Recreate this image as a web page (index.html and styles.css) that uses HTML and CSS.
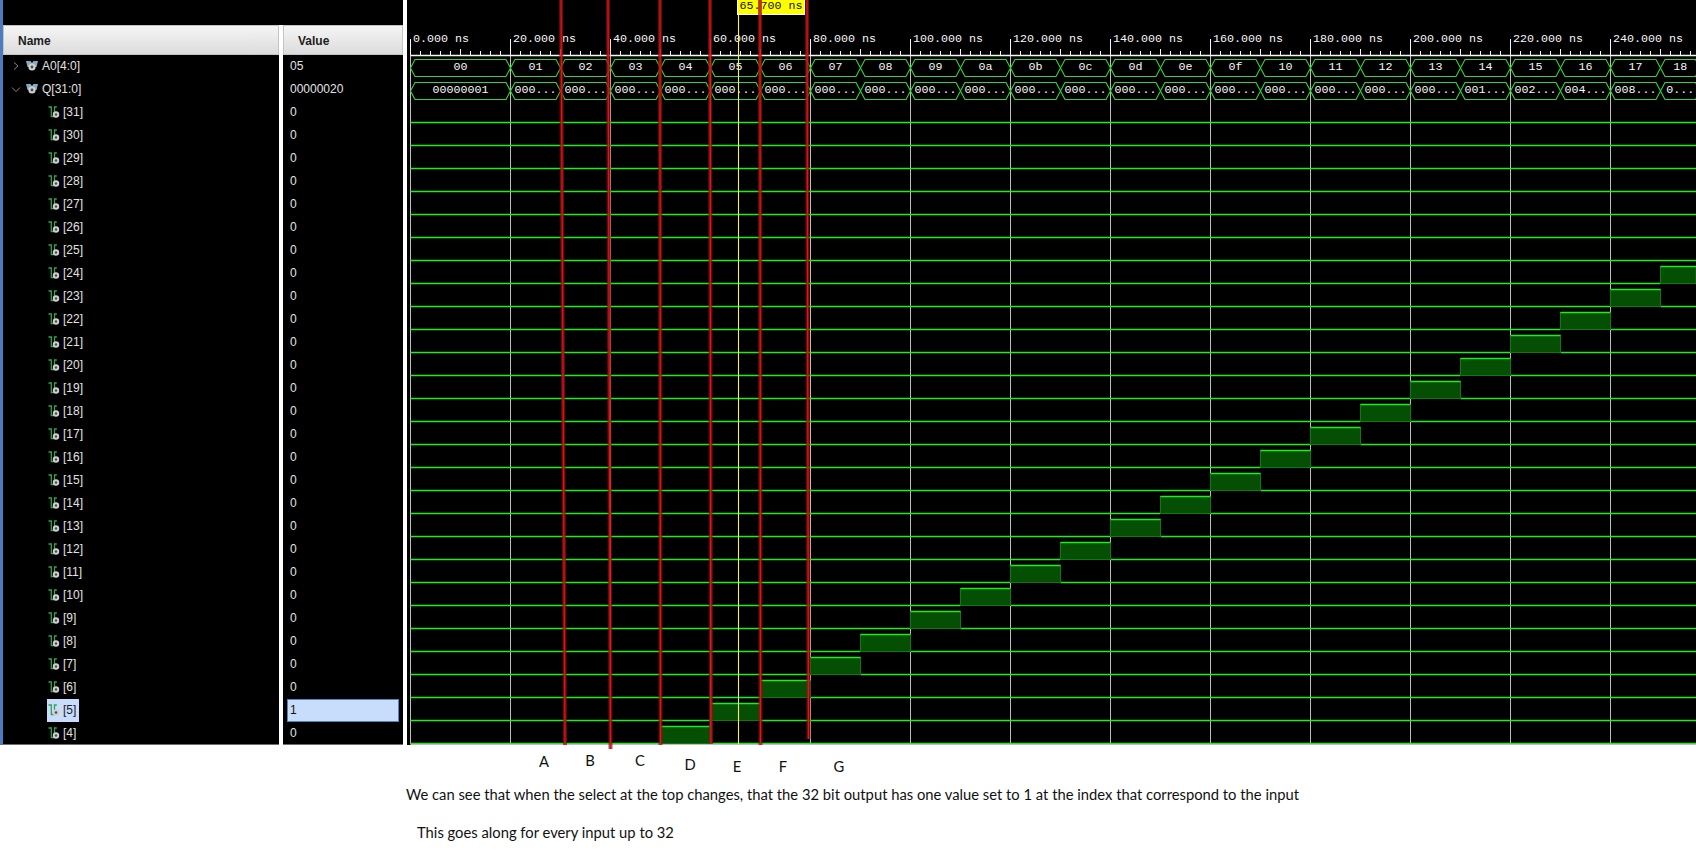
FILE: index.html
```html
<!DOCTYPE html>
<html lang="en">
<head>
  <meta charset="UTF-8" />
  <title>Waveform</title>
  <link rel="stylesheet" href="styles.css">
</head>
<body>

<svg class="defs" width="0" height="0">
  <symbol id="icon-bus" viewBox="0 0 12 10">
    <path d="M0 0h4.500l1.500 2v2.500l-1.500 1.500h-3z" fill="#86a9c6" />
    <path d="M12 0h-4.500l-1.500 2v2.500l1.500 1.500h3z" fill="#86a9c6" />
    <circle cx="6" cy="6" r="3.600" fill="#cfcfcf" />
    <circle cx="6" cy="6" r="1.400" fill="#4a4a4a" />
  </symbol>
  <symbol id="icon-bit" viewBox="0 0 12 12">
    <path d="M0.500 1h2.800v9.500h3M6.500 10V1h2.300" fill="none" stroke="#2fa552" stroke-width="1.300" />
    <circle cx="8" cy="8.500" r="3.200" fill="#cfcfcf" />
    <circle cx="8" cy="8.500" r="1.200" fill="#4a4a4a" />
  </symbol>
</svg>

<div class="sim">
  <div class="tree">
    <div class="tree-top"></div>
    <div class="tree-cols">
      <div class="col col-name">
        <div class="col-head">Name</div>
        <div id="name-rows"></div>
      </div>
      <div class="col col-value">
        <div class="col-head">Value</div>
        <div id="value-rows"></div>
      </div>
    </div>
  </div>
  <div class="wave-panel">
    <svg id="wave" class="wave" width="1289" height="750" viewBox="407 0 1289 750"></svg>
  </div>
</div>

<div class="notes">
  <span class="mark mark-a">A</span>
  <span class="mark mark-b">B</span>
  <span class="mark mark-c">C</span>
  <span class="mark mark-d">D</span>
  <span class="mark mark-e">E</span>
  <span class="mark mark-f">F</span>
  <span class="mark mark-g">G</span>
  <p class="note-one">We can see that when the select at the top changes, that the 32 bit output has one value set to 1 at the index that correspond to the input</p>
  <p class="note-two">This goes along for every input up to 32</p>
</div>

<script src="script.js"></script>
</body>
</html>
```
FILE: styles.css
```css
body {
  margin: 0;
  background: #fff;
  font-family: "Liberation Sans", Arial, sans-serif;
  overflow: hidden;
}
.defs {
  position: absolute;
}
.sim {
  display: flex;
  height: 745px;
  background: #fff;
}

/* left side: signal names and values */
.tree {
  width: 403px;
  display: flex;
  flex-direction: column;
}
.tree-top {
  height: 25px;
  background: #000;
  border-left: 3px solid #4a7cc4;
}
.tree-cols {
  flex: 1;
  display: flex;
  gap: 4px;
  min-height: 0;
}
.col {
  box-sizing: border-box;
  height: 720px;
  overflow: hidden;
  background: #000;
  border-bottom: 1px solid #6e6e6e;
}
.col-name {
  width: 279px;
  border-left: 3px solid #4a7cc4;
}
.col-value {
  width: 120px;
}
.col-head {
  box-sizing: border-box;
  height: 30px;
  line-height: 31px;
  background: linear-gradient(#f5f5f5, #dcdcdc);
  border: 1px solid #c4c4c4;
  font-size: 12px;
  font-weight: bold;
  color: #1c1c1c;
}
.col-name .col-head {
  padding-left: 14px;
}
.col-value .col-head {
  padding-left: 14px;
}
.row {
  box-sizing: border-box;
  display: flex;
  align-items: center;
  height: 23px;
  padding-bottom: 1px;
  font-size: 12px;
  color: #e2e2e2;
}
.row-bus {
  padding-left: 7px;
}
.row-bit {
  padding-left: 44px;
}
.chevron {
  width: 12px;
  height: 12px;
  margin-right: 4px;
}
.icon-bus {
  width: 12px;
  height: 10px;
  margin-right: 4px;
}
.icon-bit {
  width: 12px;
  height: 12px;
  margin-right: 3px;
}
.bit-label {
  display: flex;
  align-items: center;
  height: 23px;
  padding: 0 3px 0 1px;
}
.bit-label.selected {
  background: #c8dcfb;
  color: #222;
}
.row-value {
  padding-left: 7px;
}
.row-value.selected {
  margin-left: 4px;
  width: 112px;
  padding-left: 2px;
  background: #c8dcfb;
  border: 1px solid #4a86c0;
  color: #111;
}

/* right side: waveform */
.wave-panel {
  margin-left: 4px;
  width: 1289px;
  height: 745px;
  background: #000;
}
.wave {
  display: block;
  position: relative;
  overflow: visible;
}
.grid {
  stroke: #bdbdbd;
  stroke-width: 1;
}
.ruler {
  stroke: #f6f6f6;
  stroke-width: 1;
}
.ruler-base {
  stroke: #f6f6f6;
  stroke-width: 1.400;
}
.wave-text {
  font-family: "Liberation Mono", "Courier New", monospace;
  font-size: 11.67px;
  fill: #f8f8f8;
}
.bus {
  fill: none;
  stroke: #33d633;
  stroke-width: 1.100;
}
.low {
  stroke: #18f018;
  stroke-width: 1.300;
}
.high-fill {
  fill: #054f05;
  stroke: #0d7a0d;
  stroke-width: 1;
}
.high-top {
  stroke: #18f018;
  stroke-width: 1.500;
}
.cursor {
  stroke: #f8f060;
  stroke-width: 1.100;
}
.flag {
  fill: #ffff00;
  stroke: #fff;
  stroke-width: 1;
}
.flag-text {
  fill: #111;
}
.red-halo {
  stroke: #8e1212;
  stroke-width: 4;
  opacity: 0.7;
}
.red-core {
  stroke: #e01414;
  stroke-width: 1.300;
}

/* annotations under the picture */
.notes {
  position: relative;
  height: 110px;
  font-family: Lato, "Open Sans", sans-serif;
  font-size: 14.780px;
  color: #111;
}
.notes p {
  margin: 0;
  white-space: nowrap;
}
.note-one {
  padding: 40px 0 0 406px;
}
.note-two {
  padding: 20px 0 0 417px;
}
.mark {
  position: absolute;
  transform: translateX(-50%);
}
.mark-a { left: 544px; top: 7px; }
.mark-b { left: 590px; top: 6px; }
.mark-c { left: 640px; top: 6px; }
.mark-d { left: 690px; top: 10px; }
.mark-e { left: 737px; top: 12px; }
.mark-f { left: 783px; top: 12px; }
.mark-g { left: 839px; top: 12px; }
```
FILE: script.js
```js
const X0 = 410.5;
const NS = 5;
const END = 1696;
const xAt = (ns) => X0 + ns * NS;
const hex2 = (n) => n.toString(16).padStart(2, '0');

// name and value rows
const nameRows = document.getElementById('name-rows');
const valueRows = document.getElementById('value-rows');
const chevronRight = '<svg class="chevron" viewBox="0 0 12 12"><path d="M4 2.500l4 3.500-4 3.500" fill="none" stroke="#8a8a8a"/></svg>';
const chevronDown = '<svg class="chevron" viewBox="0 0 12 12"><path d="M2 4.500l4 4 4-4" fill="none" stroke="#8a8a8a"/></svg>';
const busIcon = '<svg class="icon-bus"><use href="#icon-bus"/></svg>';
const bitIcon = '<svg class="icon-bit"><use href="#icon-bit"/></svg>';

let names = `<div class="row row-bus">${chevronRight}${busIcon}A0[4:0]</div>`;
names += `<div class="row row-bus">${chevronDown}${busIcon}Q[31:0]</div>`;
let values = '<div class="row row-value">05</div><div class="row row-value">00000020</div>';
for (let i = 31; i >= 4; i--) {
  const sel = i === 5 ? ' selected' : '';
  names += `<div class="row row-bit"><span class="bit-label${sel}">${bitIcon}[${i}]</span></div>`;
  values += `<div class="row row-value${sel}">${i === 5 ? 1 : 0}</div>`;
}
nameRows.innerHTML = names;
valueRows.innerHTML = values;

// waveform
let svg = '';
const line = (x1, y1, x2, y2, cls) => `<line x1="${x1}" y1="${y1}" x2="${x2}" y2="${y2}" class="${cls}"/>`;
const text = (x, y, s, extra = '', anchor = 'start') =>
  `<text x="${x}" y="${y}" class="wave-text ${extra}" text-anchor="${anchor}">${s}</text>`;

function busSeg(x0, x1, top, label) {
  const bot = top + 17;
  const mid = top + 8.5;
  const pts = [[x0, mid], [x0 + 4.5, top], [x1 - 4.5, top], [x1, mid], [x1 - 4.5, bot], [x0 + 4.5, bot]];
  svg += `<polygon points="${pts.join(' ')}" class="bus"/>`;
  svg += text((x0 + x1) / 2, top + 10, label, '', 'middle');
}

// grid + ruler
for (let ns = 0; xAt(ns) < END; ns += 20) {
  svg += line(xAt(ns), 39, xAt(ns), 744, 'grid');
  svg += line(xAt(ns), 39, xAt(ns), 55, 'ruler');
  svg += text(xAt(ns) + 2.5, 42, ns.toFixed(3) + ' ns');
}
svg += line(X0, 55.5, END, 55.5, 'ruler-base');
for (let ns = 0; xAt(ns) < END; ns += 2) {
  const h = ns % 10 === 0 ? 6 : 4;
  svg += line(xAt(ns), 55, xAt(ns), 55 - h, 'ruler');
}

// A0 and Q buses
busSeg(xAt(0), xAt(20), 59.5, '00');
busSeg(xAt(0), xAt(20), 82.5, '00000001');
for (let n = 1; n <= 24; n++) {
  const a = xAt(10 + 10 * n);
  const b = xAt(20 + 10 * n);
  const q = (2 ** n).toString(16).padStart(8, '0').slice(0, 3);
  if (n === 24) {
    // last one runs off the right edge
    busSeg(a, END + 4, 59.5, hex2(n));
    busSeg(a, END + 4, 82.5, '0...');
  } else {
    busSeg(a, b, 59.5, hex2(n));
    busSeg(a, b, 82.5, q + '...');
  }
}

// single bits, [31] at the top down to [4]
for (let i = 31; i >= 4; i--) {
  const low = 122.5 + (31 - i) * 23;
  const a = xAt(10 + 10 * i);
  const b = xAt(20 + 10 * i);
  if (a >= END) {
    svg += line(X0, low, END, low, 'low');
    continue;
  }
  svg += line(X0, low, a, low, 'low');
  if (b < END) svg += line(b, low, END, low, 'low');
  svg += `<rect x="${a}" y="${low - 17}" width="${Math.min(b, END) - a}" height="17" class="high-fill"/>`;
  svg += line(a, low - 17, Math.min(b, END), low - 17, 'high-top');
}
svg += line(X0, 744.5, END, 744.5, 'grid');

// cursor
svg += line(738.5, 14, 738.5, 744, 'cursor');
svg += '<rect x="737.500" y="-1" width="67" height="15.500" class="flag"/>';
svg += text(739.5, 9, '65.700 ns', 'flag-text');

// hand drawn red markers
[[561, 0, 565, 745], [608, 0, 610.5, 749], [660, 0, 660.5, 745],
 [710, 0, 711, 744], [760, 0, 760.5, 745], [807, 0, 808.5, 739]].forEach((m) => {
  svg += line(m[0], m[1], m[2], m[3], 'red-halo');
  svg += line(m[0], m[1], m[2], m[3], 'red-core');
});

document.getElementById('wave').innerHTML = svg;
```
